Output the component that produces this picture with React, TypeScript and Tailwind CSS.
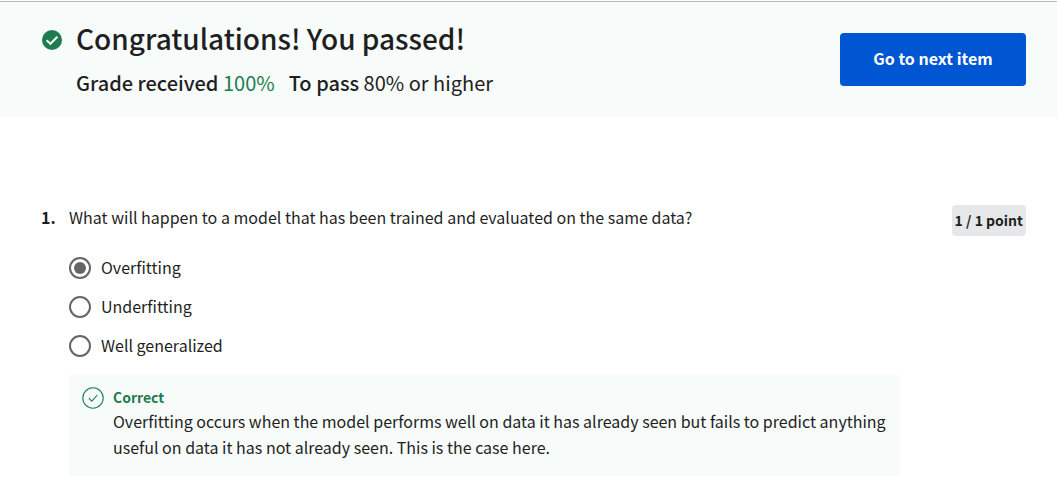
import { useState } from "react";

const options = ["Overfitting", "Underfitting", "Well generalized"];

function PassedIcon() {
  return (
    <svg viewBox="0 0 20 20" className="mt-7 size-5 shrink-0" aria-hidden="true">
      <circle cx="10" cy="10" r="10" fill="#1d7c50" />
      <path d="M4.6 10.2 8.4 13.8 15.4 6.7" fill="none" stroke="#fff" strokeWidth="2" />
    </svg>
  );
}

function CorrectIcon() {
  return (
    <svg
      viewBox="0 0 22 22"
      className="mt-3 size-[22px] shrink-0"
      fill="none"
      stroke="#1d7c50"
      aria-hidden="true"
    >
      <circle cx="11" cy="11" r="10.2" strokeWidth="1.1" />
      <path d="M6.8 11.2 9.8 14.2 15.4 8" strokeWidth="1.1" />
    </svg>
  );
}

export default function App() {
  const [answer, setAnswer] = useState(options[0]);

  return (
    <div className="bg-white pt-px font-['Noto_Sans_CJK_SC',sans-serif] text-base text-[#1f1f1f]">
      <header className="flex items-start justify-between border-t border-[#b8bcb9] bg-[#f7fbfa] pr-[31px] pb-4 pl-[42px]">
        <div className="flex gap-[14px]">
          <PassedIcon />
          <div className="pt-4">
            <h1 className="text-[28px] leading-10 font-medium">Congratulations! You passed!</h1>
            <p className="mt-[7px] flex gap-[14px] text-xl leading-9">
              <span>
                <span className="font-medium">Grade received</span>{" "}
                <span className="text-[#1d7c50]">100%</span>
              </span>
              <span>
                <span className="font-medium">To pass</span> 80% or higher
              </span>
            </p>
          </div>
        </div>
        <button
          type="button"
          className="mt-[31px] h-[53px] w-[186px] rounded bg-[#0056d2] pb-[3px] font-bold text-white"
        >
          Go to next item
        </button>
      </header>

      <main className="pt-[88px] pr-[31px] pb-[26px] pl-[41px]">
        <div className="flex items-start">
          <span className="w-7 shrink-0 leading-6 font-bold">1.</span>
          <p id="question" className="grow leading-6">
            What will happen to a model that has been trained and evaluated on the same data?
          </p>
          <span className="shrink-0 rounded bg-[#e5e7e8] px-[3px] text-sm leading-[31px] font-bold">
            1 / 1 point
          </span>
        </div>

        <div className="mr-[126px] ml-7">
          <div role="radiogroup" aria-labelledby="question" className="mt-[19px] flex flex-col gap-[13px]">
            {options.map((option) => (
              <label key={option} className="flex items-center gap-[10px] leading-6">
                <input
                  type="radio"
                  name="answer"
                  checked={answer === option}
                  onChange={() => setAnswer(option)}
                  className="grid size-[22px] appearance-none place-content-center rounded-full border-2 border-[#666] before:size-3 before:rounded-full checked:before:bg-[#666]"
                />
                <span className="pb-[2px]">{option}</span>
              </label>
            ))}
          </div>

          <section className="mt-4 flex gap-[9px] bg-[#f7fbfa] pr-2 pb-4 pl-[13px]">
            <CorrectIcon />
            <div className="pt-[11px]">
              <h2 className="text-sm leading-[22px] font-bold text-[#1d7c50]">Correct</h2>
              <p className="leading-[26px]">
                Overfitting occurs when the model performs well on data it has already seen but fails to
                predict anything useful on data it has not already seen. This is the case here.
              </p>
            </div>
          </section>
        </div>
      </main>
    </div>
  );
}
